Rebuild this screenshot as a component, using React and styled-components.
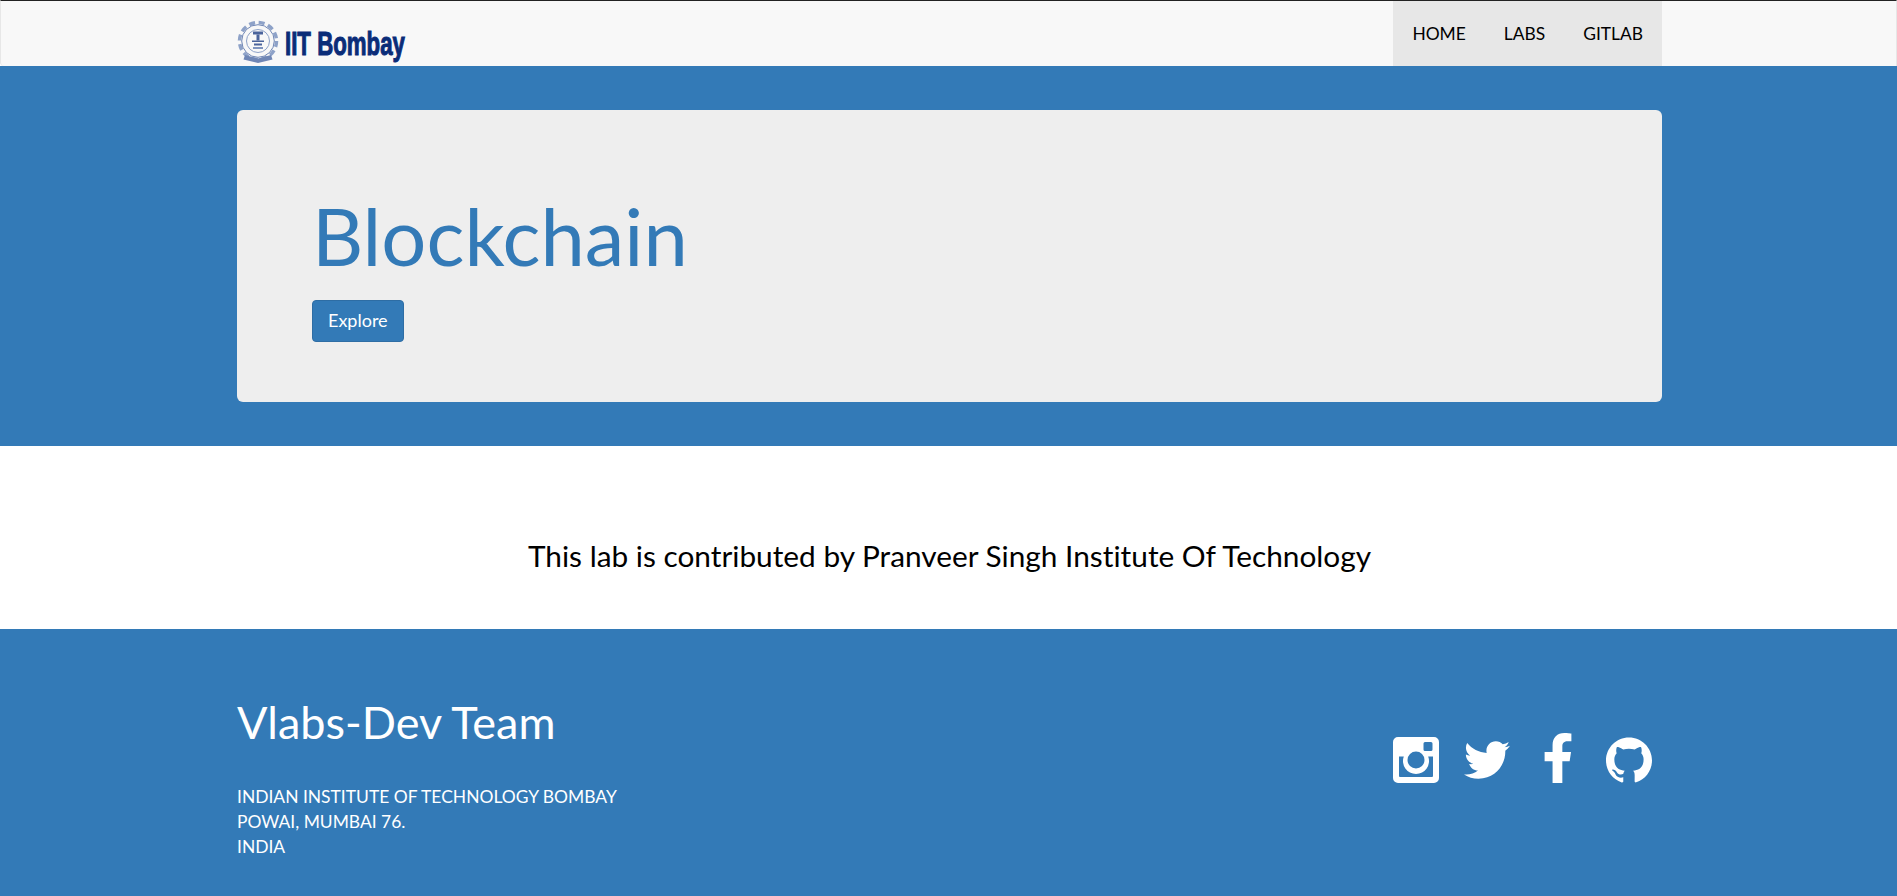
import React from "react"
import styled, { createGlobalStyle } from "styled-components"
import { FaTwitter, FaFacebookF } from "react-icons/fa"
import { SiGithub } from "react-icons/si"

const GlobalStyle = createGlobalStyle`
  * {
    box-sizing: border-box;
  }

  body {
    margin: 0;
    font-family: Lato, "Open Sans", sans-serif;
    font-size: 18px;
    font-variant-ligatures: none;
    line-height: 1.42857;
    color: #000;
    background: #fff;
  }
`

const Container = styled.div`
  width: 1425px;
  margin-left: 237px;
`

const Navbar = styled.nav`
  height: 66px;
  background: #f8f8f8;
  border: 1px solid #e7e7e7;
  border-top: 1px solid #222;
  border-bottom: 0;
  border-radius: 0 0 0 4px;
`

const NavInner = styled(Container)`
  height: 100%;
  margin-left: 236px;
  display: flex;
  justify-content: space-between;
`

const Brand = styled.a`
  display: flex;
  align-items: flex-start;
  padding-top: 18px;
`

const NavLinks = styled.ul`
  display: flex;
  list-style: none;
  margin: 0;
  padding: 0;
  background: #e7e7e7;
`

const NavLink = styled.a`
  display: block;
  padding: 20px 19px 0;
  font-size: 17.4px;
  line-height: 25px;
  color: #000;
  text-decoration: none;
`

const Hero = styled.section`
  background: #337ab7;
  padding: 44px 0;
  height: 380px;
`

const Jumbotron = styled(Container)`
  height: 292px;
  padding: 82px 75px 0;
  background: #eee;
  border-radius: 6px;
`

const Title = styled.h1`
  margin: 0 0 20px;
  font-size: 79.5px;
  font-weight: 400;
  line-height: 88px;
  color: #337ab7;
`

const Button = styled.a`
  display: inline-block;
  padding: 6px 15px 8px;
  font-size: 18px;
  line-height: 26px;
  color: #fff;
  text-decoration: none;
  background: #337ab7;
  border: 1px solid #2e6da4;
  border-radius: 4px;
`

const Credit = styled.section`
  height: 183px;
  padding: 87px 0 0 2px;
  text-align: center;
  font-size: 29.8px;
  line-height: 46px;
`

const Footer = styled.footer`
  height: 267px;
  background: #337ab7;
  color: #fff;
`

const FooterInner = styled(Container)`
  display: flex;
  justify-content: space-between;
`

const FooterHeading = styled.h2`
  margin: 68px 0 37px;
  font-size: 45px;
  font-weight: 400;
  line-height: 50px;
`

const Address = styled.p`
  margin: 0;
  font-size: 17.45px;
  line-height: 25px;
`

const Socials = styled.div`
  display: grid;
  grid-template-columns: repeat(4, 71px);
  justify-items: center;
  align-items: center;
  height: 50px;
  margin: 104px -2px 0 0;

  svg {
    display: block;
  }
`

const FacebookIcon = styled(FaFacebookF)`
  margin-bottom: 4px;
`

const Logo = () => (
  <svg width="172" height="46" viewBox="0 0 172 46">
    <g fill="none">
      <circle cx="21" cy="22" r="18.5" stroke="#8ea2c8" strokeWidth="3.5" strokeDasharray="6 3.7" />
      <circle cx="21" cy="22" r="16.3" stroke="#6f86b5" strokeWidth="1" />
      <circle cx="21" cy="22" r="11.5" stroke="#8ea2c8" strokeWidth="1" />
    </g>
    <g fill="#4a639b">
      <rect x="16" y="12.5" width="10" height="3" />
      <rect x="19.500" y="15.500" width="3" height="6" />
      <rect x="15" y="21.500" width="12" height="1.500" />
      <rect x="17" y="24.500" width="8" height="2" />
      <rect x="16" y="28" width="10" height="2" fill="#7f94bf" />
      <path d="M8 36 L21 39.500 L34 36 L35.500 40.500 L21 44 L6.500 40.500 Z" fill="#6f86b5" />
    </g>
    <text
      transform="translate(48 36) scale(0.655 1)"
      fontFamily="'Liberation Sans', sans-serif"
      fontSize="34"
      fontWeight="700"
      fill="#0a2c78"
      stroke="#0a2c78"
      strokeWidth="1.1"
    >
      IIT Bombay
    </text>
  </svg>
)

const InstagramIcon = () => (
  <svg width="46" height="46" viewBox="0 0 46 46">
    <path
      fill="#fff"
      fillRule="evenodd"
      d="M5 0h36a5 5 0 0 1 5 5v36a5 5 0 0 1-5 5H5a5 5 0 0 1-5-5V5a5 5 0 0 1 5-5zM32 5a1.500 1.500 0 0 0-1.500 1.500v6A1.500 1.500 0 0 0 32 14h6a1.500 1.500 0 0 0 1.500-1.500v-6A1.500 1.500 0 0 0 38 5zM6 19.500V39a1 1 0 0 0 1 1h32a1 1 0 0 0 1-1V19.500h-4.800a13 13 0 1 1-24.400 0zM23 14.500a8.500 8.500 0 1 0 0 17 8.500 8.500 0 0 0 0-17z"
    />
  </svg>
)

const App = () => (
  <>
    <GlobalStyle />
    <Navbar>
      <NavInner>
        <Brand href="#">
          <Logo />
        </Brand>
        <NavLinks>
          <li><NavLink href="#">HOME</NavLink></li>
          <li><NavLink href="#">LABS</NavLink></li>
          <li><NavLink href="#">GITLAB</NavLink></li>
        </NavLinks>
      </NavInner>
    </Navbar>

    <Hero>
      <Jumbotron>
        <Title>Blockchain</Title>
        <Button href="#">Explore</Button>
      </Jumbotron>
    </Hero>

    <Credit>This lab is contributed by Pranveer Singh Institute Of Technology</Credit>

    <Footer>
      <FooterInner>
        <div>
          <FooterHeading>Vlabs-Dev Team</FooterHeading>
          <Address>
            INDIAN INSTITUTE OF TECHNOLOGY BOMBAY
            <br />
            POWAI, MUMBAI 76.
            <br />
            INDIA
          </Address>
        </div>
        <Socials>
          <InstagramIcon />
          <FaTwitter size={46} color="#fff" />
          <FacebookIcon size={50} color="#fff" />
          <SiGithub size={46} color="#fff" />
        </Socials>
      </FooterInner>
    </Footer>
  </>
)

export default App
